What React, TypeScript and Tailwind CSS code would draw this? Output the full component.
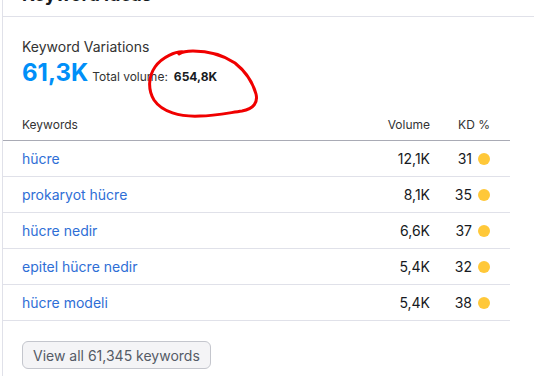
import React from 'react';

const rows = [
  { keyword: 'hücre', volume: '12,1K', kd: 31 },
  { keyword: 'prokaryot hücre', volume: '8,1K', kd: 35 },
  { keyword: 'hücre nedir', volume: '6,6K', kd: 37 },
  { keyword: 'epitel hücre nedir', volume: '5,4K', kd: 32 },
  { keyword: 'hücre modeli', volume: '5,4K', kd: 38 },
];

function Scribble() {
  // hand drawn red circle over the total volume
  return (
    <svg className="absolute left-0 top-0 pointer-events-none" width="534" height="376" viewBox="0 0 534 376">
      <path
        d="M184 52 C 176 51, 162 57, 155 67 C 148 77, 148 90, 154 100 C 162 112, 180 117, 200 116 C 214 116, 228 113, 242 111 C 254 109, 258 102, 256 94 C 253 83, 245 71, 235 63 C 223 55, 207 51, 193 51 C 187 51, 182 52, 179 54"
        fill="none"
        stroke="#f00000"
        strokeWidth="3"
        strokeLinecap="round"
        strokeLinejoin="round"
      />
    </svg>
  );
}

export default function App() {
  return (
    <div className="relative w-[534px] h-[376px] overflow-hidden bg-white text-[#171a22]" style={{ fontFamily: 'Inter, "Noto Sans", sans-serif' }}>
      <div className="ml-[2px] h-full border-l border-[#e0e1e9] flex flex-col">
        {/* HEADER */}
        <div className="h-[17px] border-b border-[#e0e1e9] relative overflow-hidden">
          <div className="absolute left-[19px] bottom-[9px] text-[18px] font-bold leading-[24px] whitespace-nowrap">
            Keyword Ideas
          </div>
        </div>

        <div className="mr-[24px] flex flex-col">
          {/* SUMMARY */}
          <div className="pl-[19px] pt-[20px]">
            <div className="text-[14px] leading-[20px] text-[#333]">Keyword Variations</div>
            <div className="flex items-baseline mt-[2px] leading-[28px]">
              <span className="text-[24px] font-bold text-[#008ff8] leading-[28px]">61,3K</span>
              <span className="ml-[4px] text-[12px] text-[#333]">Total volume:</span>
              <span className="ml-[6px] text-[12px] font-bold text-[#171a22]">654,8K</span>
            </div>
          </div>

          {/* TABLE */}
          <div className="mt-[26px] flex flex-col">
            <div className="flex items-end pb-[7px] border-b border-[#a9abb5] text-[12px] leading-[16px] text-[#333]">
              <div className="flex-1 pl-[19px]">Keywords</div>
              <div className="w-[80px] text-right">Volume</div>
              <div className="w-[80px] pr-[20px] text-right">KD %</div>
            </div>
            {rows.map((r) => (
              <div key={r.keyword} className="h-[36px] flex items-center border-b border-[#e0e1e9] text-[14px]">
                <div className="flex-1 pl-[19px] text-[#2e6ed6]">{r.keyword}</div>
                <div className="w-[80px] text-right">{r.volume}</div>
                <div className="w-[80px] pr-[20px] flex items-center justify-end gap-[6px]">
                  <span>{r.kd}</span>
                  <span className="w-[12px] h-[12px] rounded-full bg-[#ffc839]" />
                </div>
              </div>
            ))}
          </div>

          <div className="pl-[19px] pt-[20px]">
            <button className="h-[28px] px-[10px] rounded-[6px] border border-[#c4c6cd] bg-[#f4f4f6] text-[14px] text-[#555b66]">
              View all 61,345 keywords
            </button>
          </div>
        </div>
      </div>
      <Scribble />
    </div>
  );
}
